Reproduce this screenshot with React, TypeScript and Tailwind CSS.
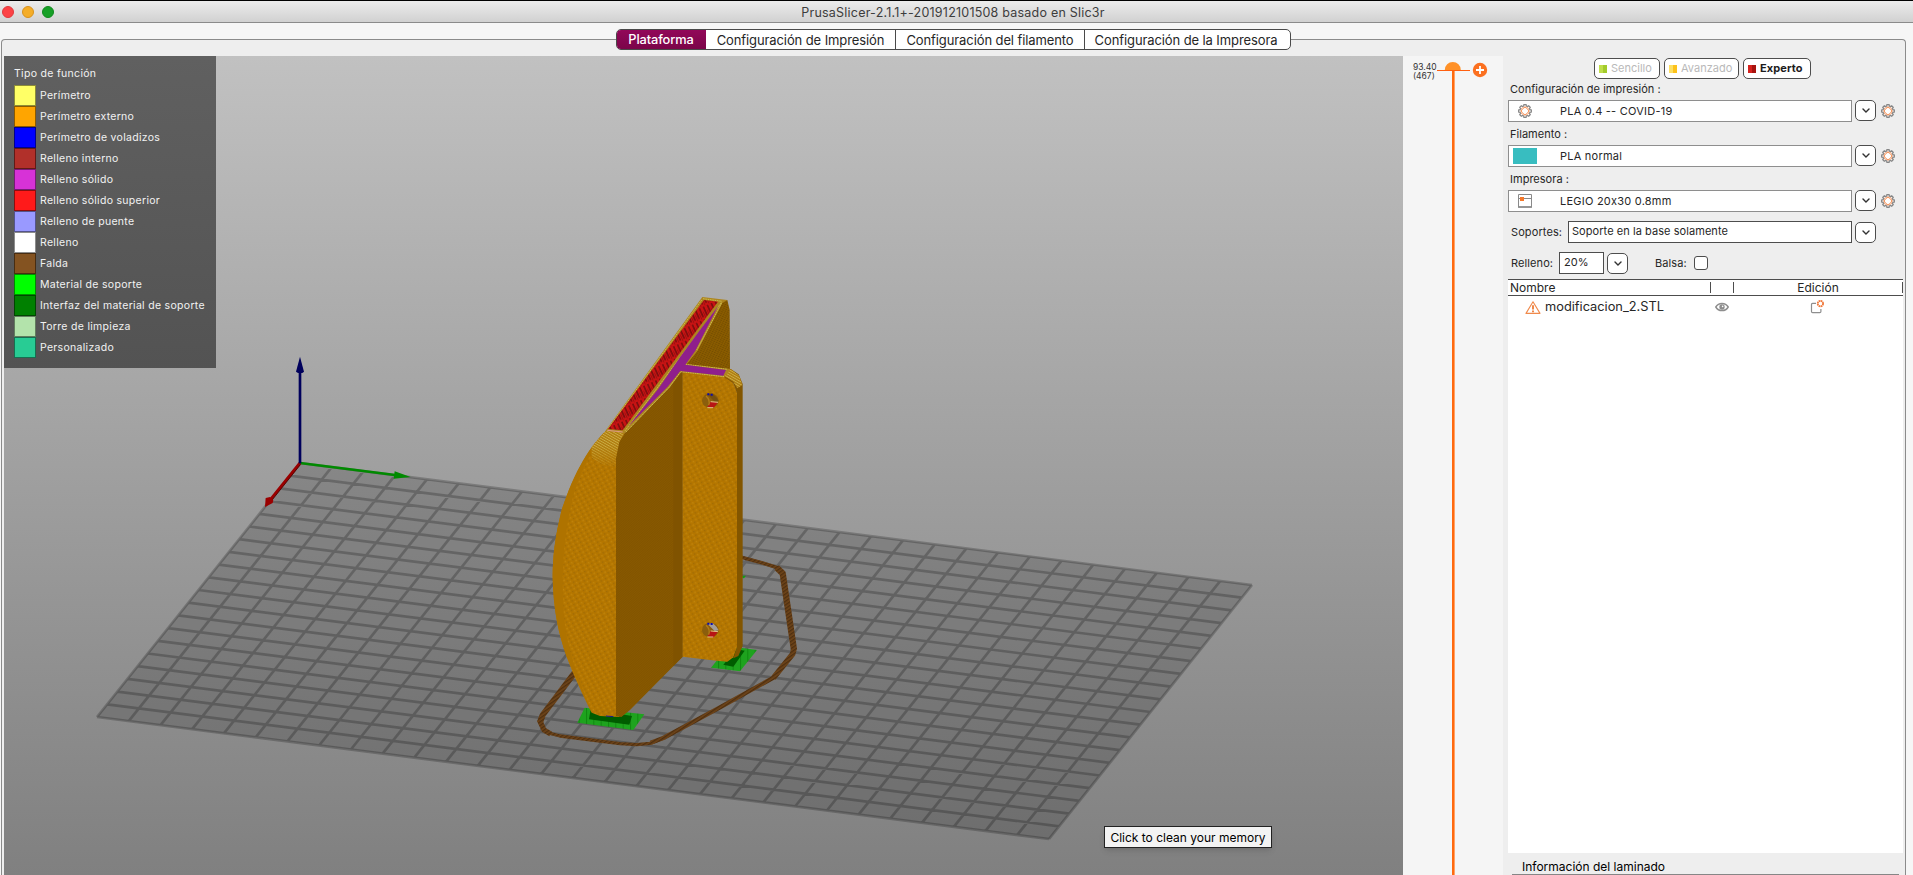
import React from "react";

const LEGEND = [
  ["Perímetro", "#ffff66"],
  ["Perímetro externo", "#ffa500"],
  ["Perímetro de voladizos", "#0000ff"],
  ["Relleno interno", "#b1302a"],
  ["Relleno sólido", "#d732d7"],
  ["Relleno sólido superior", "#ff1a1a"],
  ["Relleno de puente", "#9999ff"],
  ["Relleno", "#ffffff"],
  ["Falda", "#845321"],
  ["Material de soporte", "#00ff00"],
  ["Interfaz del material de soporte", "#008000"],
  ["Torre de limpieza", "#b3e3ab"],
  ["Personalizado", "#28cc94"],
];

function gearPath(teeth: number, outer: number, inner: number) {
  const pts: string[] = [];
  for (let i = 0; i < teeth; i++) {
    const a = (i / teeth) * Math.PI * 2;
    const s = Math.PI / teeth;
    for (const [r, o] of [
      [outer, -0.42],
      [outer, 0.42],
      [inner, 0.7],
      [inner, 1.3],
    ]) {
      pts.push(`${(7 + r * Math.cos(a + o * s)).toFixed(2)},${(7 + r * Math.sin(a + o * s)).toFixed(2)}`);
    }
  }
  return `M${pts.join("L")}Z`;
}

function Gear() {
  return (
    <svg className="size-3.5 shrink-0" viewBox="0 0 14 14">
      <path d={gearPath(8, 6.4, 5.1)} fill="none" stroke="#878787" strokeWidth="1.3" />
      <path d={gearPath(8, 4, 3.2)} fill="#fff" stroke="#f47f3c" strokeWidth="1" />
    </svg>
  );
}

function PrinterIcon() {
  return (
    <svg className="size-3.5 shrink-0" viewBox="0 0 14 14">
      <path d="M.5 .5h13v12.5h-13z" fill="#fff" stroke="#8a8a8a" />
      <path d="M0 13h14" stroke="#8a8a8a" strokeWidth="1.6" />
      <path d="M1 4.5h12" stroke="#8a8a8a" />
      <path d="M2 3h4v4H2z" fill="#f4792c" />
    </svg>
  );
}

function DropButton() {
  return (
    <button className="flex size-[21px] shrink-0 items-center justify-center rounded-[5px] border border-[#4d4d4d] bg-white">
      <svg className="h-[5px] w-[8px]" viewBox="0 0 8 5">
        <path d="M1 .9 4 3.9 7 .9" fill="none" stroke="#333" strokeWidth="1.4" strokeLinecap="round" />
      </svg>
    </button>
  );
}

function ModeButton({ label, left, right, cls, text }: { label: string; left: string; right: string; cls: string; text: string }) {
  return (
    <button className={`flex h-[21px] items-center rounded-[5px] border border-[#4d4d4d] bg-white pl-[4px] ${cls}`}>
      <svg className="mr-[4px] size-2 shrink-0" viewBox="0 0 8 8">
        <path d="M0 0h4v8H0z" fill={left} />
        <path d="M4 0h4v8H4z" fill={right} />
      </svg>
      <span className={`whitespace-nowrap leading-none ${text}`}>{label}</span>
    </button>
  );
}

function Preset({ label, icon, value }: { label: string; icon: React.ReactNode; value: string }) {
  return (
    <div className="h-[45px]">
      <div className="flex h-[21px] items-center pl-[2px]">
        <span className="whitespace-nowrap text-[11px] leading-none tracking-[0.02px]">{label}</span>
      </div>
      <div className="flex h-[22px] items-start">
        <div className="flex h-[22px] w-[344px] items-center border border-[#8e8e8e] bg-white">
          <div className="flex w-[51px] shrink-0 items-center">{icon}</div>
          <span className="whitespace-nowrap text-[11px] leading-none tracking-[0.23px]">{value}</span>
        </div>
        <div className="ml-[3px] flex items-center gap-[5px]">
          <DropButton />
          <Gear />
        </div>
      </div>
    </div>
  );
}

function Bed() {
  const A = [300, 463];
  const u = [952, 122];
  const v = [-203, 254];
  const p = (s: number, t: number) => `${(A[0] + u[0] * s + v[0] * t).toFixed(1)} ${(A[1] + u[1] * s + v[1] * t).toFixed(1)}`;
  let d = "";
  for (let i = 0; i <= 30; i++) d += `M${p(i / 30, 0)}L${p(i / 30, 1)}`;
  for (let i = 0; i <= 20; i++) d += `M${p(0, i / 20)}L${p(1, i / 20)}`;
  return (
    <g>
      <path d={`M${p(0, 0)}L${p(1, 0)}L${p(1, 1)}L${p(0, 1)}Z`} fill="#000" fillOpacity=".155" />
      <path d={d} fill="none" stroke="#000" strokeOpacity=".22" strokeWidth="2.7" />
    </g>
  );
}

function Scene() {
  return (
    <svg className="block h-[819px] w-[1399px]" viewBox="4 56 1399 819">
      <defs>
        <pattern id="dots" width="15" height="12" patternUnits="userSpaceOnUse" patternTransform="rotate(-28)">
          <rect width="15" height="12" fill="#b47600" />
          <rect x="1" y="1" width="3" height="3" fill="#8a5f0a" />
          <rect x="8" y="7" width="3" height="3" fill="#d0961a" />
        </pattern>
        <pattern id="dark" width="12" height="5" patternUnits="userSpaceOnUse" patternTransform="rotate(-42)">
          <rect width="12" height="5" fill="#885900" />
          <rect width="12" height="2" fill="#805300" />
        </pattern>
        <pattern id="back" width="8" height="6" patternUnits="userSpaceOnUse" patternTransform="rotate(25)">
          <rect width="8" height="6" fill="#8a5c00" />
          <rect width="5" height="2.5" fill="#704a00" />
        </pattern>
        <pattern id="redhatch" width="13" height="36" patternUnits="userSpaceOnUse" patternTransform="rotate(-24)">
          <rect width="13" height="36" fill="#c81313" />
          <rect x="1" width="3.5" height="29" fill="#5e0c0c" />
          <rect x="8" y="14" width="2.5" height="20" fill="#981010" />
        </pattern>
        <pattern id="skirt" width="9" height="9" patternUnits="userSpaceOnUse" patternTransform="rotate(-35)">
          <rect width="9" height="9" fill="#6e4419" />
          <rect width="9" height="4" fill="#4e2f10" />
        </pattern>
        <pattern id="green" width="22" height="20" patternUnits="userSpaceOnUse">
          <rect width="22" height="20" fill="#1ea31e" />
          <rect width="3" height="20" fill="#118811" />
        </pattern>
        <pattern id="moire" width="7" height="7" patternUnits="userSpaceOnUse" patternTransform="rotate(30)">
          <rect width="7" height="7" fill="#b07c10" />
          <rect width="7" height="2.6" fill="#cbb045" />
        </pattern>
        <linearGradient id="fade" x1="0" y1="0" x2="0" y2="1">
          <stop offset=".45" stopColor="#fff" />
          <stop offset="1" stopColor="#fff" stopOpacity="0" />
        </linearGradient>
        <mask id="fademask" maskUnits="userSpaceOnUse" x="200" y="470" width="130" height="125">
          <rect x="200" y="470" width="130" height="125" fill="url(#fade)" />
        </mask>
      </defs>
      <Bed />
      <g transform="translate(80 340) scale(.33333)">
        <path d="M660 369 945 405" stroke="#008a00" strokeWidth="8" />
        <path d="M992 411 944 394 941 416Z" fill="#008a00" />
        <path d="M660 369 572 478" stroke="#9a0000" strokeWidth="9" />
        <path d="M661 374 574 483" stroke="#4c0000" strokeWidth="2.5" />
        <path d="M555 501 557 474 570 471 580 480 578 489Z" fill="#9a0000" />
        <path d="M660 95V370" stroke="#00005c" strokeWidth="8" />
        <path d="M660 50 648 95 654 99H667L672 95Z" fill="#00005c" />
      </g>
      <g transform="translate(520 270) scale(.33333)" strokeLinejoin="round">
        <g fill="none" stroke="url(#skirt)">
          <path d="M664 862 735 881 775 894" strokeWidth="11" />
          <path d="M770 893 788 910 822 1140" strokeWidth="19" />
          <path d="M822 1136 818 1152 760 1224" strokeWidth="17" />
          <path d="M762 1222 600 1312 430 1404 392 1418" strokeWidth="13" />
          <path d="M435 1402 390 1420 350 1424 300 1421 120 1398 82 1388" strokeWidth="10" />
          <path d="M92 1392 72 1380 60 1354 66 1340" strokeWidth="16" />
          <path d="M60 1358 68 1335 164 1208" strokeWidth="18" />
        </g>
        <path d="M194 1313 373 1333 340 1380 172 1358Z" fill="url(#green)" />
        <path d="M212 1318 336 1338 328 1364 207 1348Z" fill="#005c00" />
        <path d="M650 1132 711 1140 660 1204 573 1193 590 1172Z" fill="url(#green)" />
        <path d="M650 1138 674 1142 640 1190 610 1184Z" fill="#005c00" />
        <path d="M668 917 678 917 672 925 667 924Z" fill="#12a012" />

        <path d="M606 92 622 90 629 120 630 300 495 285 532 240Z" fill="url(#back)" />
        <path d="M258 482C215 520 160 610 125 720C105 800 98 860 98 920C100 1020 115 1090 140 1160C160 1215 195 1290 215 1328L240 1338 298 1341 315 1200 315 488Z" fill="url(#dots)" />
        <path d="M215 532C160 610 140 680 125 720C105 800 98 860 98 920C100 1020 115 1090 140 1160L214 1325C180 1240 142 1140 134 1060C122 960 128 820 150 720C165 640 190 590 218 540Z" fill="#af7300" />
        <path d="M258 482 315 488 298 520 290 592C262 592 235 580 215 562L215 530Z" fill="url(#moire)" mask="url(#fademask)" />
        <path d="M315 488 298 516 288 565V1338L304 1341 330 1320 488 1160V306H482L450 350Z" fill="url(#dark)" />
        <path d="M460 340 488 306V1160L460 1188Z" fill="#805300" />
        <path d="M488 304 620 318 640 340 652 370V1130L640 1162 622 1175 590 1172 488 1160Z" fill="url(#dots)" />
        <path d="M612 300 632 297 656 313 668 342V1128L655 1158 640 1165 651 1130V370L640 340 612 320Z" fill="#835600" />
        <path d="M612 318 618 300 634 298 658 318 667 345 652 355 640 335Z" fill="url(#moire)" />

        <path d="M547 81 622 90 606 100 533 242 500 283 632 297 612 322 484 306 450 351 315 489 256 483Z" fill="#ad851f" />
        <path d="M549 86 606 94M604 98 314 484M545 90 264 476M530 240 606 98M318 486 447 352 482 305 612 320M497 283 622 298" fill="none" stroke="#d0c556" strokeWidth="2.5" strokeDasharray="5 2" />
        <path d="M552 90 594 95 308 481 264 477Z" fill="url(#redhatch)" />
        <path d="M262 481 308 486" stroke="#e09a86" strokeWidth="3" />
        <path d="M594 109 526 242 496 284 618 300 610 317 481 303 443 350 324 470 415 356 480 262 540 180Z" fill="#8f1f8c" />

        {[392, 1080].map((y, i) => (
          <g key={y}>
            <ellipse cx="571" cy={y} rx="25" ry="22" fill="#8b5e0c" />
            <path d={`M562 ${y - 19}l16 -2 12 12 6 10 -12 2Z`} fill={i ? "#a39d97" : "#75500f"} />
            <path d={`M562 ${y - 19}h6M572 ${y - 18}h6`} stroke="#0b0bb0" strokeWidth="6" />
            <path d={`M562 ${y + 19}l10 -16 22 2 -14 18Z`} fill="#b81414" />
            <path d={`M562 ${y + 21}h18M572 ${y + 3}l22 2`} stroke="#e3c489" strokeWidth="3" />
            <path d={`M558 ${y - 14}q14 12 8 28`} fill="none" stroke="#b37c16" strokeWidth="4" />
          </g>
        ))}
        <path d="M258 1338 280 1340" stroke="#1a1a90" strokeWidth="3" />
      </g>
    </svg>
  );
}

export default function App() {
  return (
    <div className="flex h-[875px] w-[1913px] flex-col overflow-hidden bg-[#f6f6f6] font-['Inter','Liberation_Sans',sans-serif] text-[#262626]">
      <header className="grid h-[23px] shrink-0 grid-cols-[1fr_auto_1fr] items-center border-t border-b border-t-black border-b-[#8b8b8b] bg-gradient-to-b from-[#ececec] to-[#d1d1d1] pr-[7px]">
        <div className="flex gap-2 pt-px pl-[2px]">
          <span className="size-3 rounded-full border border-[#e0393c] bg-[#fc4245]" />
          <span className="size-3 rounded-full border border-[#d8921d] bg-[#f4ad28]" />
          <span className="size-3 rounded-full border border-[#118a1e] bg-[#17a027]" />
        </div>
        <h1 className="whitespace-nowrap pt-[3.5px] text-[12.5px] leading-none tracking-[0.22px] text-[#3d3d3d]">PrusaSlicer-2.1.1+-201912101508 basado en Slic3r</h1>
        <div />
      </header>

      <nav className="relative z-10 ml-[616px] mt-[6px] flex h-[21px] w-[675px] shrink-0 overflow-hidden rounded-[5px] border border-[#4a4a4a] bg-white text-[13px] leading-none tracking-[-0.1px]">
        <div className="-my-px -ml-px flex w-[90px] items-center justify-center bg-gradient-to-b from-[#93085a] to-[#7a0548] pt-px text-[12.8px] font-medium text-white">Plataforma</div>
        <div className="flex w-[190px] items-center justify-center whitespace-nowrap border-r border-[#4a4a4a] pt-px">Configuración de Impresión</div>
        <div className="flex w-[189px] items-center justify-center whitespace-nowrap border-r border-[#4a4a4a] pt-px">Configuración del filamento</div>
        <div className="flex flex-1 items-center justify-center whitespace-nowrap pt-px pr-[3px]">Configuración de la Impresora</div>
      </nav>

      <main className="-mt-[11px] ml-px flex w-[1905px] flex-1 rounded-t-[4px] border border-b-0 border-[#8b8b8b] bg-[#eeeeee] pl-[2px] pt-4">
        <section className="relative h-[819px] w-[1399px] shrink-0 bg-gradient-to-b from-[#c1c1c1] to-[#808080]">
          <Scene />
          <div className="absolute top-0 left-0 h-[312px] w-[212px] bg-gradient-to-b from-[#606060] to-[#535353] pl-[10px] pt-[11px] text-[10.5px] leading-none text-[#f2f2f2]">
            <div className="mb-[3px] flex h-[15px] items-center tracking-[0.3px]">Tipo de función</div>
            {LEGEND.map(([name, color]) => (
              <div key={name} className="flex h-[21px] items-center gap-[4px]">
                <span className="h-[21px] w-[22px] border border-black/45 bg-clip-border" style={{ backgroundColor: color }} />
                <span className="whitespace-nowrap pt-px tracking-[0.3px]">{name}</span>
              </div>
            ))}
          </div>
          <div className="absolute top-[770px] left-[1100px] flex h-[22px] w-[168px] items-center justify-center whitespace-nowrap border border-[#222] bg-[#f3f3f3] pt-px text-[12px] leading-none text-black shadow-md">
            Click to clean your memory
          </div>
        </section>

        <section className="flex w-[100px] shrink-0 bg-[#f5f5f5] pt-[6px] pl-[10px] text-[8.5px]">
          <div className="w-[24px] pt-px leading-[9px] text-[#333]">
            <div>93.40</div>
            <div>(467)</div>
          </div>
          <svg className="h-[813px] w-[60px] shrink-0" viewBox="0 0 60 813">
            <path d="M16.5 8v805" stroke="#ffa366" strokeWidth="3" />
            <path d="M16 8v805" stroke="#ff6a10" strokeWidth="2" />
            <path d="M0 8.5h33" stroke="#ff6010" strokeWidth="1" />
            <path d="M7.8 8a8 8 0 0 1 16 0Z" fill="#ff9128" />
            <circle cx="43" cy="8" r="7.2" fill="#fb7020" />
            <path d="M43 4v8M39 8h8" stroke="#fff" strokeWidth="1.8" />
          </svg>
        </section>

        <aside className="flex flex-1 flex-col pt-[2px] pl-[5px]">
          <div className="flex h-[21px] gap-[4px] pl-[86px]">
            <ModeButton label="Sencillo" left="#c0de4a" right="#a3cb2c" cls="w-[66px]" text="text-[11px] text-[#b9b9b9]" />
            <ModeButton label="Avanzado" left="#fddf62" right="#fcc21b" cls="w-[75px]" text="text-[11px] text-[#b9b9b9]" />
            <ModeButton label="Experto" left="#d5221e" right="#a8130f" cls="w-[68px]" text="text-[11px] font-bold tracking-[0.1px] text-[#1c1c1c]" />
          </div>
          <Preset label="Configuración de impresión :" value="PLA 0.4 -- COVID-19" icon={<span className="ml-[9px] flex"><Gear /></span>} />
          <Preset label="Filamento :" value="PLA normal" icon={<span className="ml-[4px] h-4 w-6 bg-[#38bdc0]" />} />
          <Preset label="Impresora :" value="LEGIO 20x30 0.8mm" icon={<span className="ml-[9px] flex"><PrinterIcon /></span>} />
          <div className="mt-[7px] flex h-[22px] items-center text-[11px] leading-none">
            <span className="w-[60px] pl-[3px] tracking-[0.1px]">Soportes:</span>
            <div className="flex h-[22px] w-[284px] items-center whitespace-nowrap border border-[#4d4d4d] bg-white pb-[2px] pl-[3px] tracking-[0.06px]">Soporte en la base solamente</div>
            <span className="ml-[3px]"><DropButton /></span>
          </div>
          <div className="mt-[9px] flex h-[22px] items-center text-[11px] leading-none">
            <span className="w-[51px] pl-[3px] tracking-[0.1px]">Relleno:</span>
            <div className="flex h-[22px] w-[45px] items-center border border-[#4d4d4d] bg-white pb-[2px] pl-[4px]">20%</div>
            <span className="ml-[3px]"><DropButton /></span>
            <span className="ml-[27px] w-[39px] tracking-[0.1px]">Balsa:</span>
            <span className="size-3.5 rounded-[3px] border border-[#4d4d4d] bg-white" />
          </div>
          <div className="mt-[5px] h-[574px] w-[395px] shrink-0 bg-white">
            <div className="flex h-[17px] items-center border-y border-[#4d4d4d] text-[12px] leading-none">
              <span className="w-[202px] pl-[2px]">Nombre</span>
              <span className="h-[11px] w-[24px] border-x border-[#4d4d4d]" />
              <span className="flex h-[11px] flex-1 items-center justify-center border-r border-[#4d4d4d]">Edición</span>
            </div>
            <div className="flex h-[22px] items-center pl-[17px]">
              <svg className="h-[13px] w-[16px]" viewBox="0 0 16 13">
                <path d="M8 .8 15 12.4H1Z" fill="#fff" stroke="#f08a4c" strokeWidth="1.1" strokeLinejoin="round" />
                <path d="M8 4.2v4.2M8 9.6v1.6" stroke="#ee7a35" strokeWidth="1.8" />
              </svg>
              <span className="ml-[4px] w-[170px] whitespace-nowrap text-[12.8px] leading-none">modificacion_2.STL</span>
              <svg className="h-[10px] w-[14px]" viewBox="0 0 14 10">
                <path d="M.8 5C3.6 .2 10.4 .2 13.2 5 10.4 9.8 3.6 9.8 .8 5Z" fill="#fff" stroke="#8e8e8e" strokeWidth="1.5" />
                <circle cx="7" cy="5" r="2.7" fill="#8e8e8e" />
                <circle cx="7.6" cy="4.4" r=".8" fill="#fff" />
              </svg>
              <svg className="ml-[81px] size-3.5" viewBox="0 0 14 14">
                <path d="M6 3.3H2.6Q1.5 3.3 1.5 4.4V11.6Q1.5 12.7 2.6 12.7H9.8Q10.9 12.7 10.9 11.6V9" fill="none" stroke="#8e8e8e" strokeWidth="1.2" />
                <circle cx="10.4" cy="3.6" r="2.7" fill="#fff" stroke="#f0783a" strokeWidth="1.8" strokeDasharray="1.7 .42" />
              </svg>
            </div>
          </div>
          <div className="mr-[6px] ml-[4px] flex h-[22px] shrink-0 items-center border-b border-[#868686] pt-[6px] pl-[10px] text-[12px] leading-none text-black">
            Información del laminado
          </div>
        </aside>
      </main>
    </div>
  );
}
